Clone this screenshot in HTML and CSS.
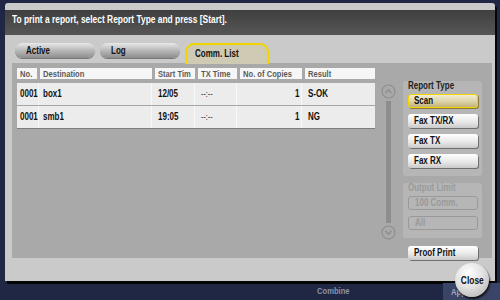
FILE: index.html
```html
<!DOCTYPE html>
<html>

<head>
  <title>Comm. List</title>
  <link rel="stylesheet" href="styles.css">
</head>

<body>
  <div class="screen">
    <div class="dialog">
      <div class="dialog-head"><span class="t">To print a report, select Report Type and press [Start].</span></div>

      <div class="tabs">
        <div class="tab"><span class="t">Active</span></div>
        <div class="tab"><span class="t">Log</span></div>
        <div class="tab tab-on"><span class="t">Comm. List</span></div>
      </div>

      <div class="panel">
        <div class="list">
          <div class="list-head">
            <div class="th c-no"><span class="t">No.</span></div>
            <div class="th c-dest"><span class="t">Destination</span></div>
            <div class="th c-start"><span class="t">Start Tim</span></div>
            <div class="th c-tx"><span class="t">TX Time</span></div>
            <div class="th c-copies"><span class="t">No. of Copies</span></div>
            <div class="th c-result"><span class="t">Result</span></div>
          </div>
          <div class="list-rows">
            <div class="row">
              <div class="td c-no"><span class="t">0001</span></div>
              <div class="td c-dest"><span class="t">box1</span></div>
              <div class="td c-start"><span class="t">12/05</span></div>
              <div class="td c-tx dim"><span class="t">--:--</span></div>
              <div class="td c-copies num"><span class="t tr">1</span></div>
              <div class="td c-result"><span class="t">S-OK</span></div>
            </div>
            <div class="row">
              <div class="td c-no"><span class="t">0001</span></div>
              <div class="td c-dest"><span class="t">smb1</span></div>
              <div class="td c-start"><span class="t">19:05</span></div>
              <div class="td c-tx dim"><span class="t">--:--</span></div>
              <div class="td c-copies num"><span class="t tr">1</span></div>
              <div class="td c-result"><span class="t">NG</span></div>
            </div>
          </div>
        </div>

        <div class="scroller">
          <svg class="arrow" width="15" height="15" viewBox="0 0 15 15">
            <circle cx="7.5" cy="7.5" r="6.5" fill="none" stroke="#8e8e8e" stroke-width="1.2"/>
            <path d="M4.5 9 L7.5 5.8 L10.5 9" fill="none" stroke="#8e8e8e" stroke-width="1.6"/>
          </svg>
          <div class="track"></div>
          <svg class="arrow" width="15" height="15" viewBox="0 0 15 15">
            <circle cx="7.5" cy="7.5" r="6.5" fill="none" stroke="#8e8e8e" stroke-width="1.2"/>
            <path d="M4.5 6 L7.5 9.2 L10.5 6" fill="none" stroke="#8e8e8e" stroke-width="1.6"/>
          </svg>
        </div>

        <div class="side">
          <div class="group">
            <div class="group-title"><span class="t">Report Type</span></div>
            <div class="btn btn-on"><span class="t">Scan</span></div>
            <div class="btn"><span class="t">Fax TX/RX</span></div>
            <div class="btn"><span class="t">Fax TX</span></div>
            <div class="btn"><span class="t">Fax RX</span></div>
          </div>
          <div class="group group-off">
            <div class="group-title"><span class="t">Output Limit</span></div>
            <div class="btn btn-off"><span class="t">100 Comm.</span></div>
            <div class="btn btn-off"><span class="t">All</span></div>
          </div>
          <div class="btn btn-proof"><span class="t">Proof Print</span></div>
        </div>
      </div>
    </div>

    <div class="footer">
      <span class="footer-label"><span class="t">Combine</span></span>
      <div class="footer-btn"><span class="t">Apply</span></div>
    </div>

    <div class="close"><span class="t tc">Close</span></div>
  </div>
</body>

</html>
```

FILE: styles.css
```css
body {
  margin: 0;
  background-color: #1f2745;
  font-family: "Liberation Sans", Arial, sans-serif;
  font-weight: bold;
  font-size: 10px;
  color: #111;
}

/* the panel font is a squeezed sans */
.t {
  display: inline-block;
  transform: scaleX(0.8);
  transform-origin: left center;
  white-space: nowrap;
}

.tr {
  transform-origin: right center;
}

.tc {
  transform-origin: center center;
}

.screen {
  position: relative;
  width: 500px;
  height: 300px;
  overflow: hidden;
}

.dialog {
  margin: 3px 5px 0 5px;
  width: 490px;
  height: 278px;
  padding-top: 7px;
  box-sizing: border-box;
  background-color: #cacaca;
  border-radius: 3px 3px 0 0;
  box-shadow: 2px 3px 0 #050505;
}

.dialog-head {
  height: 25px;
  padding: 3px 0 0 7px;
  box-sizing: border-box;
  background: linear-gradient(#3f3f3f, #565656);
  color: #fff;
  font-size: 10.5px;
  line-height: 12px;
}

.tabs {
  display: flex;
  gap: 5px;
  height: 20px;
  margin-top: 8px;
  padding-left: 10px;
  align-items: flex-start;
}

.tab {
  width: 80px;
  height: 15px;
  box-sizing: border-box;
  padding-left: 11px;
  line-height: 15px;
  border-radius: 8px;
  background: linear-gradient(#e9e9e9, #bcbcbc 45%, #8d8d8d);
  box-shadow: 0 1px 0 #777;
}

.tab-on {
  width: 84px;
  height: 21px;
  padding-top: 1px;
  padding-left: 8px;
  border: 2px solid #f2d400;
  border-bottom: none;
  border-radius: 9px 9px 0 0;
  background: #cfcab3;
  box-shadow: none;
}

.panel {
  display: flex;
  height: 195px;
  margin: 0 3px 0 7px;
  padding: 5px;
  box-sizing: border-box;
  background-color: #a9a9a9;
}

.list {
  width: 358px;
}

.list-head {
  display: flex;
  gap: 3px;
  height: 11px;
}

.th {
  box-sizing: border-box;
  padding-left: 3px;
  background-color: #f6f6f6;
  color: #5a5a5a;
  font-size: 9.5px;
  line-height: 11px;
  overflow: hidden;
}

.c-no { width: 20px; }
.c-dest { width: 112px; }
.c-start { width: 40px; }
.c-tx { width: 39px; }
.c-copies { width: 62px; }
.c-result { width: 70px; }

.list-rows {
  margin-top: 4px;
  border-bottom: 1px solid #7d7d7d;
}

.row {
  display: flex;
  gap: 3px;
  height: 22px;
  background-color: #ececec;
  border-bottom: 1px solid #a6a6a6;
}

.row:last-child {
  border-bottom: none;
}

.td {
  box-sizing: border-box;
  padding-left: 3px;
  line-height: 22px;
  border-right: 1px solid #f8f8f8;
}

.td.c-no {
  width: 22px;
  margin-right: -2px;
}

.td.c-result {
  border-right: none;
}

.dim {
  font-weight: normal;
  color: #222;
  font-size: 9px;
}

.num {
  text-align: right;
  padding-right: 1px;
}

.scroller {
  display: flex;
  flex-direction: column;
  align-items: center;
  width: 16px;
  margin: 16px 0 0 5px;
}

.track {
  width: 5px;
  height: 122px;
  margin: 2px 0;
  background-color: #8d8d8d;
}

.side {
  width: 79px;
  margin-left: 7px;
  padding-top: 16px;
}

.group {
  padding: 0 4px 8px 5px;
  background-color: #b6b6b6;
  border-radius: 3px;
}

.group-title {
  height: 7px;
  margin-top: -3px;
  line-height: 10px;
  font-size: 10px;
  color: #222;
}

.btn {
  height: 14px;
  margin-top: 6px;
  box-sizing: border-box;
  padding-left: 6px;
  line-height: 14px;
  border-radius: 3px;
  background: linear-gradient(#ffffff, #e6e6e6 60%, #c9c9c9);
  box-shadow: 1px 1px 0 #6f6f6f;
}

.btn-on {
  padding-left: 5px;
  border: 1.5px solid #f2d400;
  line-height: 11px;
  background: linear-gradient(#f1ecd4, #dcd2a5 55%, #c1b27c);
  box-shadow: 1px 1px 0 #8a7a3a;
}

.group-off {
  margin-top: 10px;
}

.group-off .group-title {
  color: #9b9b9b;
}

.btn-off {
  border: 1px solid #999;
  line-height: 12px;
  color: #999;
  background: transparent;
  box-shadow: none;
}

.btn-proof {
  margin-top: 8px;
  margin-right: 4px;
  margin-left: 5px;
}

.footer {
  display: flex;
  align-items: center;
  height: 19px;
}

.footer-label {
  margin-left: 317px;
  color: #8c93a8;
  font-size: 9.5px;
}

.footer-btn {
  width: 62px;
  height: 17px;
  margin-left: 85px;
  margin-top: 2px;
  padding-left: 8px;
  box-sizing: border-box;
  background-color: #3a4466;
  color: #aab;
  font-size: 9.5px;
  line-height: 17px;
}

.close {
  position: absolute;
  left: 455px;
  top: 263px;
  width: 34px;
  height: 34px;
  border-radius: 50%;
  background: radial-gradient(circle at 40% 30%, #ffffff, #e2e2e2 45%, #a9a9a9);
  box-shadow: 1px 2px 2px #111;
  text-align: center;
  line-height: 34px;
  font-size: 10.5px;
}
```
